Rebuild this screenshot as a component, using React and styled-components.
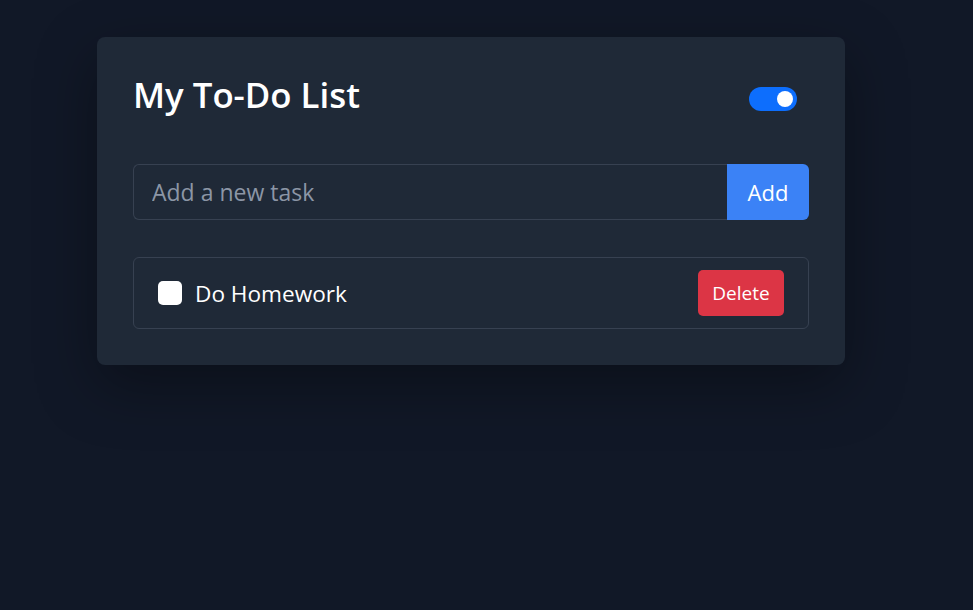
import React, { useState } from 'react';
import styled, { createGlobalStyle } from 'styled-components';

const GlobalStyle = createGlobalStyle`
  body {
    margin: 0;
    background: #111827;
    font-family: 'Open Sans', 'Noto Sans', sans-serif;
  }
`;

const Page = styled.div`
  min-height: 100vh;
  padding: 37px 0 0 97px;
  box-sizing: border-box;
`;

const Card = styled.div`
  width: 748px;
  box-sizing: border-box;
  padding: 36px;
  background: #1f2937;
  border-radius: 8px;
  box-shadow: 0 20px 60px rgba(0, 0, 0, 0.35);
`;

const Header = styled.div`
  display: flex;
  justify-content: space-between;
  align-items: center;
`;

const Title = styled.h1`
  margin: 0;
  font-size: 34.8px;
  font-weight: 600;
  line-height: 44px;
  color: #ffffff;
`;

const Switch = styled.button`
  position: relative;
  width: 48px;
  height: 24px;
  margin: 8px 12px 0 0;
  padding: 0;
  border: none;
  border-radius: 12px;
  background: ${(props) => (props.on ? '#0d6efd' : '#4b5563')};
  cursor: pointer;
  &::after {
    content: '';
    position: absolute;
    top: 4px;
    left: ${(props) => (props.on ? '28px' : '4px')};
    width: 16px;
    height: 16px;
    border-radius: 50%;
    background: #ffffff;
  }
`;

const InputGroup = styled.form`
  display: flex;
  height: 56px;
  margin-top: 47px;
`;

const TaskInput = styled.input`
  flex: 1;
  min-width: 0;
  box-sizing: border-box;
  padding: 0 18px;
  background: transparent;
  border: 1px solid #374151;
  border-right: none;
  border-radius: 6px 0 0 6px;
  font-family: inherit;
  font-size: 23px;
  color: #ffffff;
  outline: none;
  &::placeholder {
    color: #8c96a6;
  }
`;

const AddButton = styled.button`
  width: 82px;
  border: none;
  border-radius: 0 6px 6px 0;
  background: #3b82f6;
  color: #ffffff;
  font-family: inherit;
  font-size: 22px;
  cursor: pointer;
`;

const TaskList = styled.ul`
  list-style: none;
  margin: 37px 0 0;
  padding: 0;
`;

const TaskItem = styled.li`
  display: flex;
  align-items: center;
  height: 72px;
  box-sizing: border-box;
  padding: 0 24px;
  border: 1px solid #374151;
  border-radius: 6px;
`;

const Checkbox = styled.input`
  appearance: none;
  width: 24px;
  height: 24px;
  margin: 0;
  border-radius: 5px;
  background: #ffffff;
  cursor: pointer;
  &:checked {
    background: #0d6efd;
  }
`;

const TaskText = styled.span`
  margin-left: 13px;
  font-size: 22.6px;
  color: #ffffff;
  text-decoration: ${(props) => (props.done ? 'line-through' : 'none')};
`;

const DeleteButton = styled.button`
  margin-left: auto;
  width: 86px;
  height: 46px;
  border: none;
  border-radius: 5px;
  background: #dc3545;
  color: #ffffff;
  font-family: inherit;
  font-size: 19px;
  cursor: pointer;
`;

const App = () => {
  const [dark, setDark] = useState(true);
  const [text, setText] = useState('');
  const [tasks, setTasks] = useState([{ id: 1, title: 'Do Homework', done: false }]);

  const onSubmit = (e) => {
    e.preventDefault();
    if (!text.trim()) return;
    setTasks([...tasks, { id: Date.now(), title: text, done: false }]);
    setText('');
  };

  return (
    <>
      <GlobalStyle />
      <Page>
        <Card>
          <Header>
            <Title>My To-Do List</Title>
            <Switch on={dark ? 1 : 0} onClick={() => setDark(!dark)} aria-label="toggle theme" />
          </Header>
          <InputGroup onSubmit={onSubmit}>
            <TaskInput
              placeholder="Add a new task"
              value={text}
              onChange={(e) => setText(e.target.value)}
            />
            <AddButton type="submit">Add</AddButton>
          </InputGroup>
          <TaskList>
            {tasks.map((task) => (
              <TaskItem key={task.id}>
                <Checkbox
                  type="checkbox"
                  checked={task.done}
                  onChange={() =>
                    setTasks(tasks.map((t) => (t.id === task.id ? { ...t, done: !t.done } : t)))
                  }
                />
                <TaskText done={task.done ? 1 : 0}>{task.title}</TaskText>
                <DeleteButton onClick={() => setTasks(tasks.filter((t) => t.id !== task.id))}>
                  Delete
                </DeleteButton>
              </TaskItem>
            ))}
          </TaskList>
        </Card>
      </Page>
    </>
  );
};

export default App;
